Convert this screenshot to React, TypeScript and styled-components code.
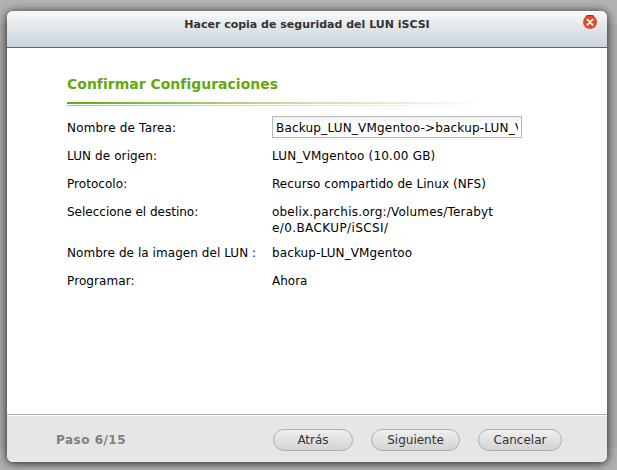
import React from "react";
import styled, { createGlobalStyle } from "styled-components";

const Global = createGlobalStyle`
  * { box-sizing: border-box; }
  html, body { margin: 0; padding: 0; }
  body {
    background: linear-gradient(#b2b2b2 0 24px, #a9a9a9 24px 448px, #b0b0b0 448px);
    height: 470px;
    overflow: hidden;
    font-family: Verdana, "DejaVu Sans", sans-serif;
    font-size: 12px;
    font-variant-ligatures: none;
    color: #000;
  }
`;

const Desktop = styled.div`
  height: 470px;
  padding: 11px 10px 8px 7px;
`;

const Dialog = styled.section`
  display: flex;
  flex-direction: column;
  width: 600px;
  height: 451px;
  border-radius: 6px;
  overflow: hidden;
  background: #fff;
  box-shadow: 0 1px 10px rgba(0, 0, 0, 0.85);
`;

const Header = styled.header`
  display: grid;
  grid-template-columns: 40px 1fr 40px;
  align-items: start;
  height: 37px;
  flex: none;
  border-bottom: 1px solid #63636f;
  background: linear-gradient(#f8faf9, #e5e9ec 40%, #d8dfe7 65%, #ced5df);
`;

const Title = styled.h1`
  grid-column: 2;
  margin: 5px 0 0;
  text-align: center;
  font-size: 11px;
  line-height: 17px;
  font-weight: bold;
  color: #333;
`;

const CloseButton = styled.button`
  width: 14px;
  height: 14px;
  margin: 4px 0 0 16px;
  padding: 0;
  border: 0;
  background: none;
  svg { display: block; }
`;

const Content = styled.main`
  flex: 1;
  padding: 27px 60px 0;
`;

const Heading = styled.h2`
  margin: 0;
  font-size: 14px;
  line-height: 18px;
  color: #65a80a;
  white-space: nowrap;
`;

const Rule = styled.div`
  width: 420px;
  height: 4px;
  margin-top: 9px;
  background:
    linear-gradient(90deg, #65a80a, #c0dc96 50%, #fff) 0 0 / 100% 2px no-repeat,
    linear-gradient(90deg, #a9cf70, #d5e8b9 50%, #fff) 0 3px / 100% 1px no-repeat;
`;

const Details = styled.dl`
  display: grid;
  grid-template-columns: 205px 250px;
  row-gap: 12px;
  margin: 14px 0 0;
  line-height: 16px;
`;

const Text = styled.span<{ $spacing?: number }>`
  display: block;
  letter-spacing: ${(p) => p.$spacing ?? 0}px;
  white-space: pre;
`;

const Label = styled.dt`
  margin: 0;
`;

const Value = styled.dd<{ $multiline?: boolean }>`
  margin: 0 0 ${(p) => (p.$multiline ? -3 : 0)}px;
`;

const TaskName = styled.input`
  display: block;
  width: 250px;
  height: 22px;
  margin: -4px 0 -2px;
  padding: 1px 3px 0;
  border: 1px solid #b9b9b9;
  border-radius: 0;
  outline: none;
  background: linear-gradient(#eef1f1, #fff 7px);
  font: inherit;
  letter-spacing: 0.2px;
  color: #000;
`;

const Footer = styled.footer`
  display: flex;
  align-items: center;
  flex: none;
  height: 48px;
  padding: 2px 45px 0 49px;
  border-top: 1px solid #b0b0b0;
  box-shadow: inset 0 1px #fff;
  background: #e6e6e6;
`;

const Step = styled.strong`
  flex: 1;
  letter-spacing: 0.5px;
  color: #7f7f7f;
`;

const Actions = styled.div`
  display: flex;
  gap: 18px;
`;

const Button = styled.button<{ $width: number }>`
  width: ${(p) => p.$width}px;
  height: 22px;
  padding: 0;
  border: 1px solid #b1b1b1;
  border-radius: 11px;
  background: linear-gradient(#f0f0f0, #d3d3d3);
  font: inherit;
  line-height: 20px;
  color: #333;
`;

type Line = { text: string; spacing: number };

const rows: { label: Line; value: Line[] }[] = [
  {
    label: { text: "LUN de origen:", spacing: 0.1 },
    value: [{ text: "LUN_VMgentoo (10.00 GB)", spacing: 0.18 }],
  },
  {
    label: { text: "Protocolo:", spacing: 0.05 },
    value: [{ text: "Recurso compartido de Linux (NFS)", spacing: 0.07 }],
  },
  {
    label: { text: "Seleccione el destino:", spacing: 0 },
    value: [
      { text: "obelix.parchis.org:/Volumes/Terabyt", spacing: 0.2 },
      { text: "e/0.BACKUP/iSCSI/", spacing: 0.4 },
    ],
  },
  {
    label: { text: "Nombre de la imagen del LUN :", spacing: 0.06 },
    value: [{ text: "backup-LUN_VMgentoo", spacing: 0.11 }],
  },
  {
    label: { text: "Programar:", spacing: 0.1 },
    value: [{ text: "Ahora", spacing: 0 }],
  },
];

export default function App() {
  return (
    <Desktop>
      <Global />
      <Dialog>
        <Header>
          <Title>Hacer copia de seguridad del LUN iSCSI</Title>
          <CloseButton aria-label="Cerrar">
            <svg width="14" height="14" viewBox="0 0 14 14">
              <circle cx="7" cy="7" r="7" fill="#e04d36" />
              <path d="M3 1.6A6.6 6.6 0 0 1 11 1.6" fill="none" stroke="#9f2c16" strokeWidth="1.2" />
              <path d="M4.4 4.6l5.2 5.2M9.6 4.6L4.4 9.8" stroke="#fff" strokeWidth="1.8" strokeLinecap="round" />
            </svg>
          </CloseButton>
        </Header>
        <Content>
          <Heading>Confirmar Configuraciones</Heading>
          <Rule />
          <Details>
            <Label><Text $spacing={0.18}>Nombre de Tarea:</Text></Label>
            <Value><TaskName defaultValue="Backup_LUN_VMgentoo->backup-LUN_VMgentoo" /></Value>
            {rows.map(({ label, value }) => (
              <React.Fragment key={label.text}>
                <Label><Text $spacing={label.spacing}>{label.text}</Text></Label>
                <Value $multiline={value.length > 1}>
                  {value.map((line) => (
                    <Text key={line.text} $spacing={line.spacing}>{line.text}</Text>
                  ))}
                </Value>
              </React.Fragment>
            ))}
          </Details>
        </Content>
        <Footer>
          <Step>Paso 6/15</Step>
          <Actions>
            <Button $width={80}>Atrás</Button>
            <Button $width={89}>Siguiente</Button>
            <Button $width={84}>Cancelar</Button>
          </Actions>
        </Footer>
      </Dialog>
    </Desktop>
  );
}
